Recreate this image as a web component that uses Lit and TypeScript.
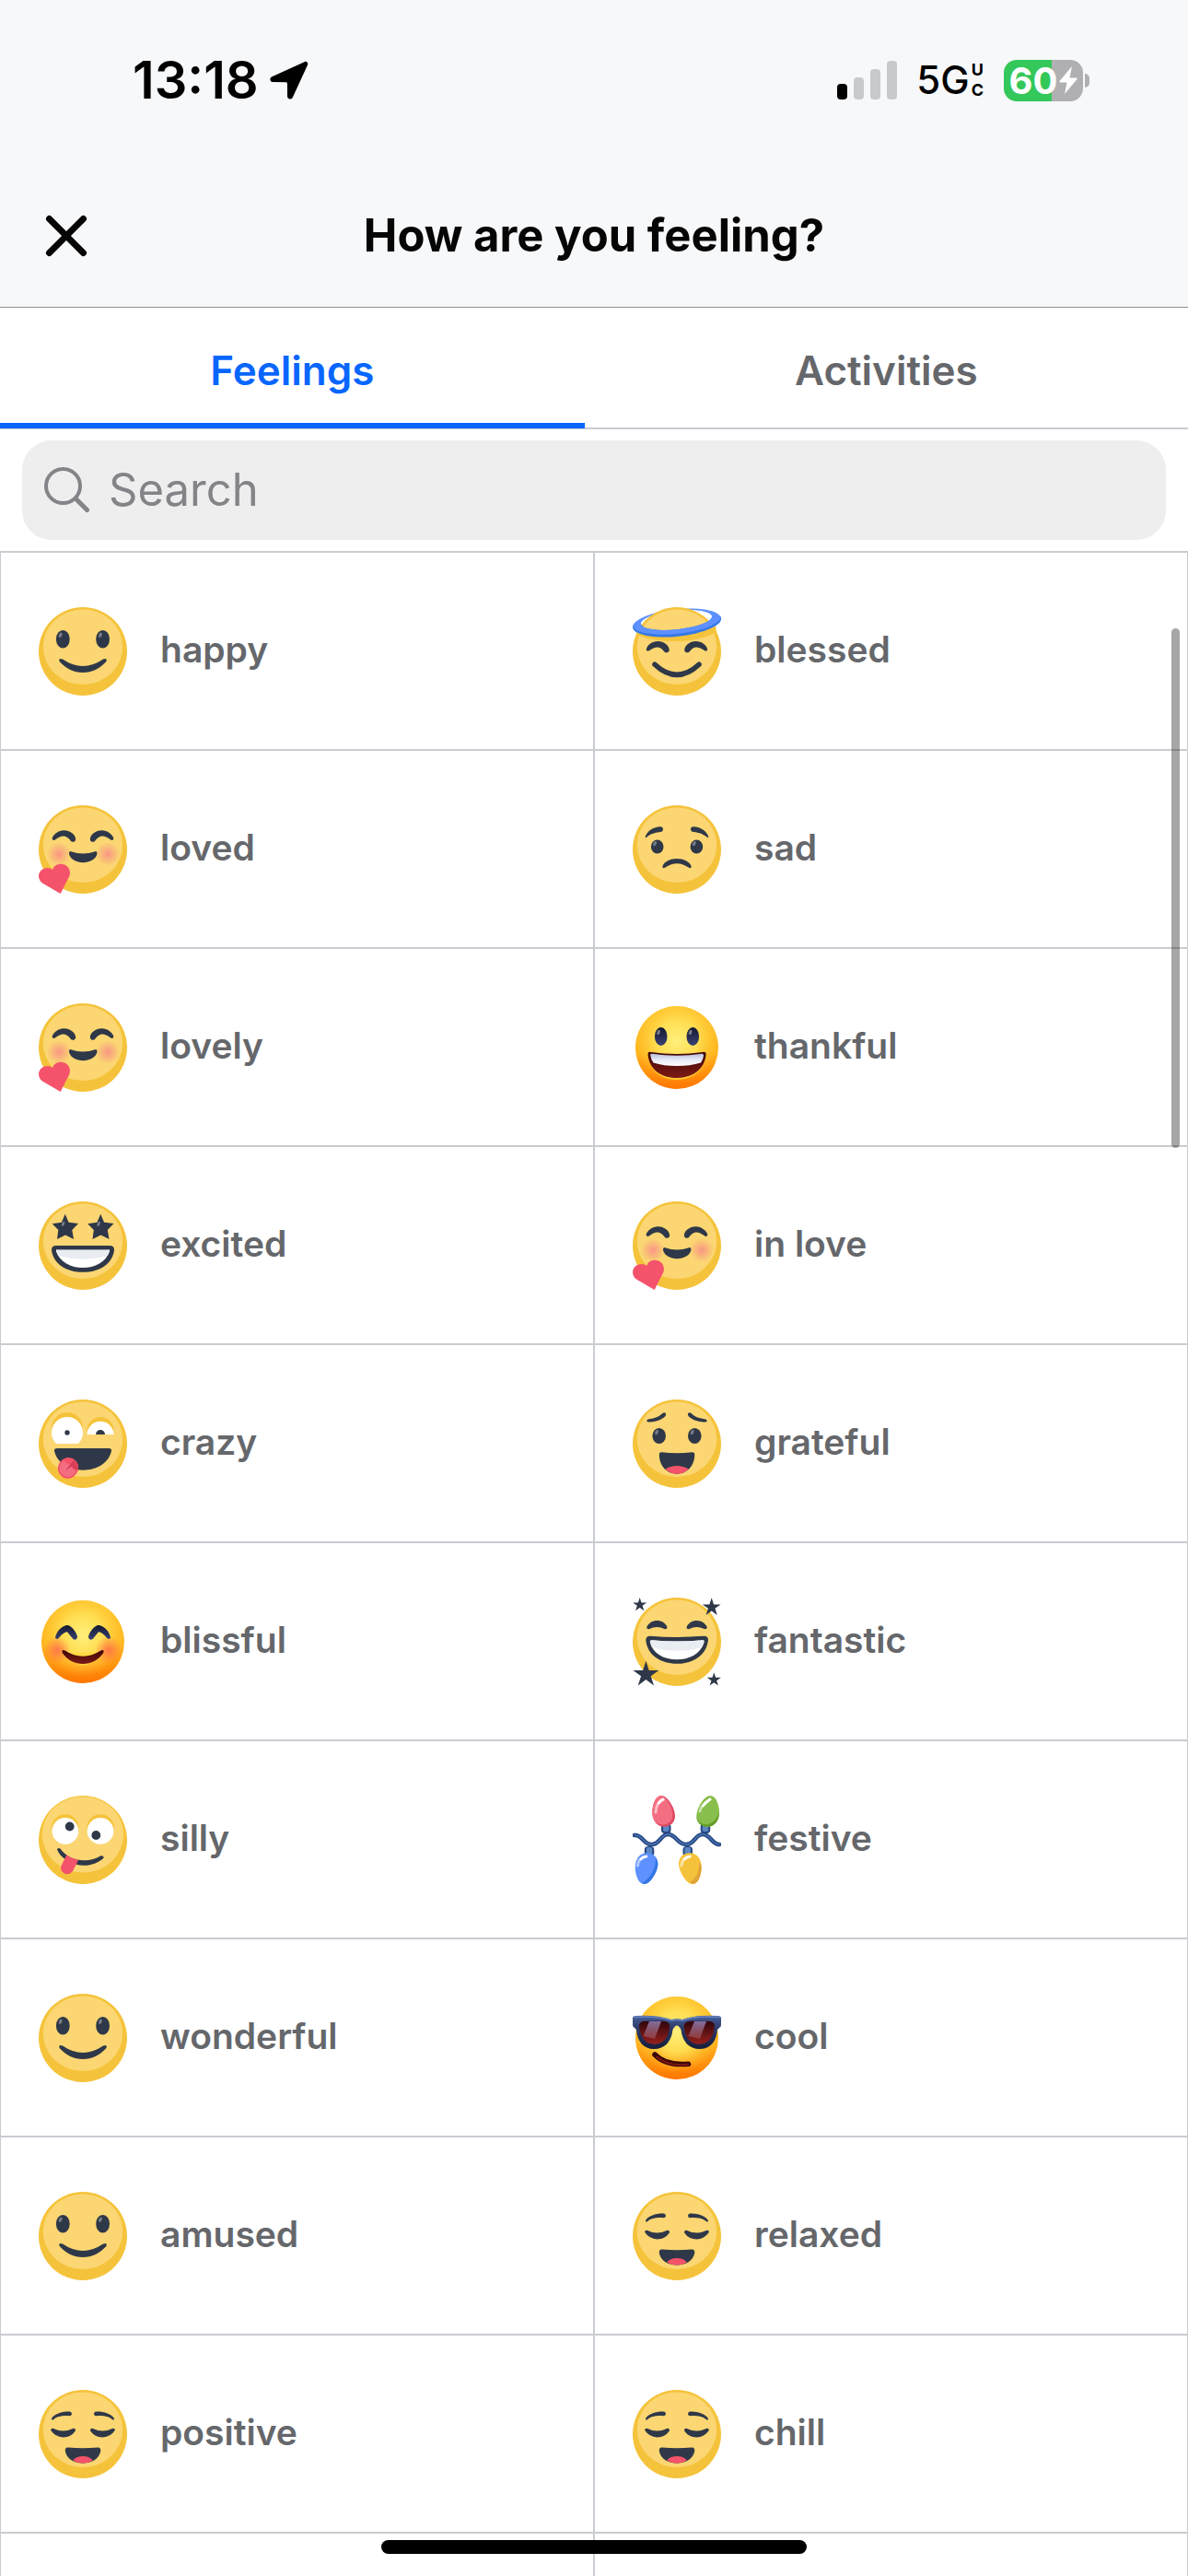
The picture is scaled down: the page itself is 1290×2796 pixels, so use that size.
import { LitElement, html, svg, css, SVGTemplateResult } from "lit";
import { customElement, property, state } from "lit/decorators.js";

const INK = "#2f3848";
const GOLD = "#f5c33b";
const BUTTER = "#fbd672";

/* Mirrors a drawing about the vertical axis of the 96-unit emoji canvas. */
const MIRROR = "translate(96 0) scale(-1 1)";

const base = svg`
  <circle cx="48" cy="48" r="48" fill=${GOLD}></circle>
  <ellipse cx="48" cy="43.2" rx="43.2" ry="40.8" fill=${BUTTER}></ellipse>`;

const glossyBase = svg`
  <circle cx="48" cy="48" r="45" fill="url(#glossy-base)"></circle>
  <circle cx="48" cy="48" r="45" fill="url(#glossy-light)"></circle>`;

const pair = (shape: SVGTemplateResult) => svg`<g>${shape}</g><g transform=${MIRROR}>${shape}</g>`;

const eye = (cx: number, cy: number, rx: number, ry: number, fill = INK) => svg`
  <ellipse cx=${cx} cy=${cy} rx=${rx} ry=${ry} fill=${fill}></ellipse>
  <ellipse cx=${cx - 2.6} cy=${cy - ry / 2.2} rx="1.7" ry="2.8" fill="#767c87"
    transform=${`rotate(24 ${cx - 2.6} ${cy - ry / 2.2})`}></ellipse>`;

const star = (cx: number, cy: number, r: number) => {
  const points = Array.from({ length: 10 }, (_, i) => {
    const radius = i % 2 ? r * 0.38 : r;
    const angle = (Math.PI / 5) * i - Math.PI / 2;
    return `${(cx + radius * Math.cos(angle)).toFixed(2)},${(cy + radius * Math.sin(angle)).toFixed(2)}`;
  }).join(" ");
  return svg`<polygon points=${points} fill=${INK}></polygon>`;
};

const happy = svg`${base}
  ${eye(26.3, 34.7, 7.4, 9.8)}${eye(69.6, 34.7, 7.4, 9.8)}
  <path fill=${INK} d="M26 56.5Q48 71.5 70 56.5Q74.8 54.6 73.4 59C66 67 58 71 48 71S30 67 22.6 59Q21.2 54.6 26 56.5Z"></path>`;

const halo = "M-.3 17a48.3 14.8 0 1 0 96.6 0a48.3 14.8 0 1 0-96.6 0ZM9 14a38.8 10.2 0 1 0 77.6 0a38.8 10.2 0 1 0-77.6 0Z";
const blessed = svg`
  <path d=${halo} fill="#5e91ff" fill-rule="evenodd" transform="rotate(-6 48 17)"></path>
  ${base}
  <path fill=${GOLD} d="M7 26Q46 36 90 20L91 27Q72 37 48 37Q22 37 7 31Z"></path>
  <g clip-path="url(#halo-front)">
    <path d=${halo} fill="#3578e5" fill-rule="evenodd" transform="rotate(-6 48 17)"></path>
    <path d="M-.3 15a48.3 13.8 0 1 0 96.6 0a48.3 13.8 0 1 0-96.6 0ZM9 14a38.8 10.2 0 1 0 77.6 0a38.8 10.2 0 1 0-77.6 0Z"
      fill="#5e91ff" fill-rule="evenodd" transform="rotate(-6 48 17)"></path>
  </g>
  ${pair(svg`<path fill=${INK} d="M14.8 46C15.5 41 21 37 27.5 37C34 37 39.5 41.5 39.8 46.5C39.6 49.6 35.5 50.5 33.6 47.5Q28 40 19 46.5Q15.5 49 14.8 46Z"></path>`)}
  <path d="M24 62.2Q48 84.5 72 62.2" fill="none" stroke=${INK} stroke-width="5.6" stroke-linecap="round"></path>`;

const loved = svg`${base}
  <circle cx="22" cy="53" r="13" fill="url(#blush)"></circle>
  <circle cx="75" cy="53" r="13" fill="url(#blush)"></circle>
  ${pair(svg`<path fill=${INK} d="M14.6 36C16 31.5 21.5 27.3 27.5 27.3C34 27.3 40 31.8 40.2 37C40 40.2 36 41 34.2 38Q28 29.5 18.6 37Q15.2 39.4 14.6 36Z"></path>`)}
  <path fill=${INK} d="M35.2 50.2Q48 54.8 61.2 50.2Q63.7 49.6 63.4 53C62 59 55 62.2 48.2 62.2S34.5 59 33 53Q32.8 49.6 35.2 50.2Z"></path>
  <path fill="#f5536b" d="M23.7 96L4 84.5C-2 80.500-1 71 6 68.700C9.500 67.200 13 68 15.300 70C16 66 20 63.500 25 63.800C32 64.500 35.500 71 33.300 77Z"></path>`;

const sad = svg`${base}
  ${pair(svg`<path fill=${INK} d="M13.7 34C16 27.500 23 23.500 30 23.200C33.800 23.200 33.800 28 31 28.800C25 29.800 19 31 15.500 34.500Q13.800 36 13.700 34Z"></path>`)}
  ${eye(26.7, 45, 6.8, 7.5)}${eye(69.4, 45, 6.8, 7.5)}
  <path fill=${INK} d="M32.4 66.500C34 61 41 58 48 58S62 61 63.700 66.500Q63.700 69 61 67.800C56 64.500 52 63.300 48 63.300S40 64.500 35 67.800Q32.300 69 32.400 66.500Z"></path>`;

const thankful = svg`${glossyBase}
  ${eye(30.7, 36, 6.8, 10, "url(#glossy-eye)")}${eye(65.3, 36, 6.8, 10, "url(#glossy-eye)")}
  <path fill="#ffd83c" opacity=".8" d="M18 58C18 72 30 83 48 83S78 72 78.500 58Z"></path>
  <path fill="url(#glossy-mouth)" d="M16.600 56Q16 52 20 53Q48 57 76 53Q80.200 52 79.600 56C78 71 66 81 48 81S18 71 16.600 56Z"></path>
  <path fill="url(#teeth)" d="M19.200 56.500Q19 54.500 21 54.800Q48 58.600 75 54.800Q77.300 54.500 77 57Q76 62 74 64.500Q62 68 48 68T22.500 64.500Q20 61 19.200 56.500Z"></path>`;

const starEye = svg`
  <path fill=${INK} d="M28.700 13.700L32.600 22.700L43 24L36.300 31L38 41L29 36.400L20 41L21.300 30.900L14.700 24.200L24.900 22.700Z"></path>
  <ellipse cx="26.600" cy="24.400" rx="1.500" ry="2.700" fill="#767c87" transform="rotate(24 26.6 24.4)"></ellipse>`;
const excited = svg`${base}
  ${starEye}<g transform="translate(38.5 0)">${starEye}</g>
  <path fill=${INK} d="M19 48H77Q82.300 48 82 53C80 68 66 76.800 48 76.800S16 68 14 53Q13.700 48 19 48Z"></path>
  <path fill="#fff" d="M20 52.300H76Q77.500 52.300 77 54C73 66 61 72 48 72S23 66 19 54Q18.500 52.300 20 52.300Z"></path>
  <path fill="#e9ecf1" d="M20 52.300H76Q77.500 52.300 77 54L75 58.500Q62 62.600 48 62.600T21 58.500L19 54Q18.500 52.300 20 52.300Z"></path>
  <path fill="#a3a7b0" d="M20 52H76V53H20Z"></path>`;

const crazy = svg`${base}
  <circle cx="31" cy="31" r="17" fill=${GOLD}></circle>
  <circle cx="67" cy="33.500" r="14.500" fill=${GOLD}></circle>
  <path fill=${BUTTER} d="M12 36H49V50H12ZM52 38H83V50H52Z"></path>
  <path fill="#fff" d="M19 48A17 17 0 1 1 43 48Z"></path>
  <circle cx="31" cy="36" r="2.700" fill=${INK}></circle>
  <path fill="#fff" d="M52.500 38A14.500 14.300 0 0 1 81.500 38Z"></path>
  <path fill=${INK} d="M62 38A5 5 0 0 1 72 38Z"></path>
  <path fill=${INK} d="M20 53H76Q79.500 53 79 56C76 69 63 76.700 48 76.700S20 69 17 56Q16.500 53 20 53Z"></path>
  <g transform="rotate(32 32 74.300)">
    <rect x="21.200" y="63" width="21.600" height="22.800" rx="10.600" fill="#f5536b"></rect>
    <path d="M32 63.500Q41.500 63.500 41.800 71Q38 73 34 70.500Z" fill="#d9415a"></path>
    <path d="M23.200 70Q27 72 32 70Q37 73 40.800 72V76Q40 83.800 32 83.800T23.200 76Z" fill="#f46e82"></path>
    <path d="M32.500 64L31 79L34.500 70Z" fill="#d23d55"></path>
  </g>`;

const grateful = svg`${base}
  ${pair(svg`<path fill=${INK} d="M15.200 23.200Q15.500 21.300 18 21.200Q27 20.300 31.500 15.800Q33.500 13.300 35.700 14.800Q37 17.300 34 19.500Q27 24.500 17.500 24.600Q15.300 24.600 15.200 23.200Z"></path>`)}
  ${eye(28.7, 39.5, 7.3, 8.6)}${eye(67.3, 39.5, 7.3, 8.6)}
  <path fill=${INK} d="M28.800 60.500Q28.500 57 31.500 57.200Q48 59.300 64.500 57.200Q67.500 57 67.300 60.500C67 72 59 80.700 48 80.700S29 72 28.800 60.500Z"></path>
  <path fill="#f5536b" d="M35.500 75.500Q41 72 48 72T60.700 75.500Q55 80.800 48 80.800T35.500 75.500Z"></path>`;

const fantastic = svg`${base}
  ${pair(svg`<path fill=${INK} d="M15.200 32.300C17 27.500 22 25 26.500 25S36 27.500 37.500 32.300Q37.300 34.800 34.500 34Q26.500 30.200 18.200 34Q15.400 34.800 15.200 32.300Z"></path>`)}
  <path fill=${INK} d="M19 41.800Q48 44.200 77.500 41.800Q82.500 41.800 81.900 47C80 62 66 71.800 48 71.800S16 62 14.400 47Q14 41.800 19 41.800Z"></path>
  <path fill="#fff" d="M20.500 46.300Q48 48.800 76 46.300Q78 46.300 77.500 48.500C74 61 62 67.300 48 67.300S22 61 18.900 48.500Q18.500 46.300 20.500 46.300Z"></path>
  <path fill="#e9ecf1" d="M20.500 46.300Q48 48.800 76 46.300Q78 46.300 77.500 48.500L75.500 53.500Q63 57.800 48 57.800T20.800 53.500L18.900 48.500Q18.500 46.300 20.500 46.300Z"></path>
  ${star(7.7, 7.9, 7.9)}${star(85.7, 10.6, 10.4)}${star(14.4, 83.5, 14.7)}${star(88.3, 89.2, 7.9)}`;

const blissful = svg`${glossyBase}
  <circle cx="20" cy="57" r="15" fill="url(#hot-blush)"></circle>
  <circle cx="76" cy="57" r="15" fill="url(#hot-blush)"></circle>
  ${pair(svg`<path fill="url(#glossy-eye)" d="M18 43C20 35 27 30 31 30C35 30 41 37 42 42.500C42 46 38.200 46.800 36.500 44L31 37.200C27.500 37.500 24 41 21.800 44Q18.500 46.500 18 43Z"></path>`)}
  <path fill="#ffd83c" opacity=".7" d="M27 60Q48 87 69 60Z"></path>
  <path fill="url(#glossy-mouth)" d="M28.500 57.500Q48 70 67.500 57.500Q71.500 56 70.300 60C65 68 57 72 48 72S31 68 25.700 60Q24.500 56 28.500 57.500Z"></path>`;

const silly = svg`
  <circle cx="48" cy="48" r="48" fill=${GOLD}></circle>
  <ellipse cx="48" cy="42.300" rx="44.200" ry="41.300" fill=${BUTTER}></ellipse>
  <circle cx="28.900" cy="35" r="14.800" fill=${GOLD}></circle>
  <circle cx="67" cy="35" r="14.800" fill=${GOLD}></circle>
  <circle cx="28.900" cy="38.400" r="14.400" fill="#fff"></circle>
  <circle cx="67" cy="38.400" r="14.400" fill="#fff"></circle>
  <circle cx="33.700" cy="33.500" r="4.900" fill=${INK}></circle>
  <circle cx="62.300" cy="43" r="4.900" fill=${INK}></circle>
  <path fill=${INK} d="M19.900 58.500Q20.500 56 23.500 57.500C30 66.500 39 70.300 49.500 70.300C56 70.300 62 68.500 67.500 65.300Q70.700 64.800 70.700 67.500C65 73 57 75.800 49.500 75.800C37 75.800 24 68.500 19.900 58.500Z"></path>
  <path fill="#f5536b" d="M30.300 64.300Q36 68.500 43.300 69.700L37.200 81.500Q33.800 86.500 28.500 84.800Q23 82 24.300 76.500Z"></path>`;

const bulb = "M31 0C24 0 21.300 12 21.300 18C21.300 28 27 33.700 34 33.700C41 33.700 46 29 46 22C46 14 38 0 31 0Z";
const bulbFace = "M31 0C24 0 21.300 12 21.300 18C21.300 26 26 31.500 32.500 31.500C39 31.500 43.300 27 43.300 21C43.300 13 38 3 31 0Z";
const cord = "M2 43C11 42 11 53 20.500 53S30 42 38.500 42S48.500 53 58 53S67.500 42 76 42S86 53 94 53";
const light = (shade: string, face: string) => svg`
  <path d=${bulb} fill=${shade}></path><path d=${bulbFace} fill=${face}></path>`;
const socket = (x: number, y: number) => svg`
  <rect x=${x} y=${y} width="10.500" height="11" rx="4" fill="#27477f"></rect>
  <rect x=${x + 2} y=${y + 1} width="6.500" height="8" rx="2" fill="#5b87c4"></rect>`;
const glint = svg`<path d="M33.500 4Q25.500 7 25 18" fill="none" stroke="#fff" stroke-opacity=".55" stroke-width="3" stroke-linecap="round"></path>
  <path d="M32.500 4.300Q30 5.500 28.500 8" fill="none" stroke="#fff" stroke-width="2.800" stroke-linecap="round"></path>`;
const lowGlint = svg`<path d="M15 66Q6 67 5.500 76" fill="none" stroke="#fff" stroke-opacity=".55" stroke-width="3" stroke-linecap="round"></path>
  <path d="M14.500 66.200Q11 66.500 9 69" fill="none" stroke="#fff" stroke-width="2.800" stroke-linecap="round"></path>`;
const festive = svg`
  ${socket(31, 30)}${socket(73.7, 30)}${socket(12.8, 55)}${socket(54.5, 55)}
  <path d=${cord} fill="none" stroke="#27477f" stroke-width="4.600" stroke-linecap="round"></path>
  <path d=${cord} fill="none" stroke="#4a74b5" stroke-width="1.500" stroke-linecap="round"></path>
  ${light("#e04a63", "#f46e82")}${glint}
  <g transform="translate(115.300 0) scale(-1 1)">
    <path d=${bulb} fill="#88be4b"></path>
    <path d="M21.300 18C21.300 28 27 33.700 34 33.700C41 33.700 46 29 46 22Q45 30.500 35 31.500Q25 30 21.300 18Z" fill="#629b26"></path>
  </g>
  <path d="M84 4Q75 9 73 17" fill="none" stroke="#fff" stroke-opacity=".55" stroke-width="3" stroke-linecap="round"></path>
  <path d="M84 4Q79 7.500 76.500 11" fill="none" stroke="#fff" stroke-width="2.800" stroke-linecap="round"></path>
  <g transform="rotate(180 48 48)">
    <path d=${bulb} fill="#f5c33b"></path>
    <path d="M31 0C24 0 21.300 12 21.300 18Q22 22 23.500 24Q23.500 8 34 2Z" fill="#e3a239"></path>
  </g>
  <g transform="translate(-18.600 96) scale(1 -1)">
    <path d=${bulb} fill="#5e91ff"></path>
    <path d="M31 0C38 0 46 14 46 22Q45.500 26 43.500 28.500Q44 12 29 1Z" fill="#3578e5"></path>
  </g>
  ${lowGlint}<g transform="translate(47.500 0)">${lowGlint}</g>`;

const cool = svg`${glossyBase}
  <path fill="url(#shades)" d="M0 26Q0 24.500 3 24Q26 22.500 42 28Q48 26.500 54 28Q70 22.500 93 24Q96 24.500 96 26V34Q96 36 94 37L92 39C91 52 84 60 73 60C61 60 54 52 52.500 39Q48 30 43.500 39C42 52 35 60 23 60C12 60 5 52 4 39L2 37Q0 36 0 34Z"></path>
  <path d="M1.500 25.500Q26 23.500 42 29Q48 27.500 54 29Q70 23.500 94.500 25.500" fill="none" stroke="#6a86bf" stroke-width="1.400"></path>
  ${pair(svg`<path fill="url(#lens)" d="M7 34Q8 29.700 14 29.700H33Q40.500 30 40.300 36C39 48 33 54.700 23.500 54.700C13 54.700 7.500 46 7 34Z"></path>`)}
  <path fill="url(#glare)" d="M18 30H31L24 49L11.500 46ZM67 30H80L73 49L60.500 46Z"></path>
  <path d="M24 66Q36 78.500 60.500 76.200" fill="none" stroke="#3d0708" stroke-width="5.600" stroke-linecap="round"></path>
  <path d="M26 68.500Q38 79 60 76.800" fill="none" stroke="#7a1a14" stroke-width="2" stroke-linecap="round"></path>`;

const relaxed = svg`${base}
  ${pair(svg`
    <path fill=${INK} d="M14 31C17 26 26 23.300 33.500 23.600C36.800 24.200 36.800 28 33.500 28.300C27 27.600 20 28.800 17 31.500Q14 34 14 31Z"></path>
    <path fill=${INK} d="M13.100 43.800Q13.200 41.300 16.200 42Q26.500 47 37 42Q40.300 41.300 39.900 44.500Q35 51.500 26.500 51.400T13.100 43.800Z"></path>`)}
  <path fill=${INK} d="M28.800 66Q28.500 62.300 32 62.500Q48 64 64 62.500Q67.500 62.300 67.300 66C66 74.500 58 79.500 48 79.500S30 74.500 28.800 66Z"></path>
  <path fill="#f5536b" d="M37.200 76.300Q41 72 48 72T58.800 76.300Q54 79.600 48 79.600T37.200 76.300Z"></path>`;

const sharedDefs = html`
  <svg class="defs" width="0" height="0" aria-hidden="true">
    <defs>
      <linearGradient id="glossy-base" x1="0" y1="0" x2="0" y2="1">
        <stop offset="0" stop-color="#ffc42e"></stop>
        <stop offset=".55" stop-color="#ffb51f"></stop>
        <stop offset="1" stop-color="#ff7600"></stop>
      </linearGradient>
      <radialGradient id="glossy-light" cx=".5" cy=".42" r=".5">
        <stop offset="0" stop-color="#fff07c"></stop>
        <stop offset=".5" stop-color="#ffe45a" stop-opacity=".85"></stop>
        <stop offset="1" stop-color="#ffd23a" stop-opacity="0"></stop>
      </radialGradient>
      <linearGradient id="glossy-eye" x1="0" y1="0" x2="0" y2="1">
        <stop offset="0" stop-color="#14182e"></stop>
        <stop offset="1" stop-color="#3a4274"></stop>
      </linearGradient>
      <linearGradient id="glossy-mouth" x1="0" y1="0" x2="0" y2="1">
        <stop offset="0" stop-color="#3d0708"></stop>
        <stop offset="1" stop-color="#7e1a16"></stop>
      </linearGradient>
      <linearGradient id="teeth" x1="0" y1="0" x2="0" y2="1">
        <stop offset="0" stop-color="#b9bfd8"></stop>
        <stop offset=".5" stop-color="#e8ebf8"></stop>
        <stop offset="1" stop-color="#ffffff"></stop>
      </linearGradient>
      <radialGradient id="blush">
        <stop offset="0" stop-color="#f88f85" stop-opacity=".9"></stop>
        <stop offset="1" stop-color="#f88f85" stop-opacity="0"></stop>
      </radialGradient>
      <radialGradient id="hot-blush">
        <stop offset="0" stop-color="#ff6a4a" stop-opacity=".85"></stop>
        <stop offset="1" stop-color="#ff6a4a" stop-opacity="0"></stop>
      </radialGradient>
      <linearGradient id="shades" x1="0" y1="0" x2="0" y2="1">
        <stop offset="0" stop-color="#47609c"></stop>
        <stop offset=".4" stop-color="#2b3966"></stop>
        <stop offset="1" stop-color="#171e3a"></stop>
      </linearGradient>
      <linearGradient id="lens" x1="0" y1="0" x2="0" y2="1">
        <stop offset="0" stop-color="#2e060c"></stop>
        <stop offset="1" stop-color="#96201c"></stop>
      </linearGradient>
      <linearGradient id="glare" x1="0" y1="0" x2="0" y2="1">
        <stop offset="0" stop-color="#a99be0" stop-opacity=".7"></stop>
        <stop offset="1" stop-color="#c98a94" stop-opacity=".3"></stop>
      </linearGradient>
      <clipPath id="halo-front"><path d="M-2 20L98 10V60H-2Z"></path></clipPath>
    </defs>
  </svg>`;

interface Feeling {
  name: string;
  art: SVGTemplateResult;
}

const FEELINGS: Feeling[] = [
  { name: "happy", art: happy },
  { name: "blessed", art: blessed },
  { name: "loved", art: loved },
  { name: "sad", art: sad },
  { name: "lovely", art: loved },
  { name: "thankful", art: thankful },
  { name: "excited", art: excited },
  { name: "in love", art: loved },
  { name: "crazy", art: crazy },
  { name: "grateful", art: grateful },
  { name: "blissful", art: blissful },
  { name: "fantastic", art: fantastic },
  { name: "silly", art: silly },
  { name: "festive", art: festive },
  { name: "wonderful", art: happy },
  { name: "cool", art: cool },
  { name: "amused", art: happy },
  { name: "relaxed", art: relaxed },
  { name: "positive", art: relaxed },
  { name: "chill", art: relaxed },
];

@customElement("status-bar")
export class StatusBar extends LitElement {
  static styles = css`
    :host {
      display: flex;
      justify-content: space-between;
      align-items: center;
      box-sizing: border-box;
      height: 178px;
      padding: 0 107px 4px 144px;
      color: #000;
    }
    .group {
      display: flex;
      align-items: center;
    }
    .time {
      font-size: 56px;
      font-weight: 600;
      line-height: 64px;
    }
    .location {
      width: 42px;
      height: 42px;
      margin-left: 12px;
    }
    .signal {
      width: 66px;
      height: 42px;
    }
    .network {
      display: flex;
      align-items: center;
      gap: 2px;
      margin: 0 22px 0 20px;
      font-size: 42px;
      font-weight: 500;
      line-height: 48px;
    }
    .network-kind {
      display: grid;
      font-size: 18px;
      font-weight: 700;
      line-height: 22px;
      text-align: center;
    }
    .battery {
      display: flex;
      align-items: center;
      justify-content: center;
      gap: 2px;
      width: 86px;
      height: 45px;
      border-radius: 14px;
      background: linear-gradient(90deg, #34c759 60%, #b0b0b2 60%);
      color: #fff;
      font-size: 40px;
      font-weight: 700;
      line-height: 45px;
    }
    .bolt {
      width: 20px;
      height: 30px;
    }
    .nub {
      width: 5px;
      height: 15px;
      margin-left: 2px;
      border-radius: 0 5px 5px 0;
      background: #b0b0b2;
    }
  `;

  render() {
    return html`
      <div class="group">
        <span class="time">13:18</span>
        <svg class="location" viewBox="0 0 42 42" aria-hidden="true">
          <path d="M37.500 1.200L2.300 17.300C-.8 18.800 0 23 3.500 23.100L17.500 23.300Q18.900 23.300 18.900 24.700L19 38.300C19.100 42 23.400 42.700 24.900 39.500L40.900 4.700C42 2 40 0 37.500 1.200Z"></path>
        </svg>
      </div>
      <div class="group">
        <svg class="signal" viewBox="0 0 66 42" aria-hidden="true">
          <rect x="0" y="25" width="11" height="17" rx="4"></rect>
          <rect x="18" y="18" width="11" height="24" rx="4" fill="#c8c9cb"></rect>
          <rect x="36" y="9" width="11" height="33" rx="4" fill="#c8c9cb"></rect>
          <rect x="54" y="0" width="11" height="42" rx="4" fill="#c8c9cb"></rect>
        </svg>
        <div class="network">
          <span>5G</span>
          <span class="network-kind"><span>U</span><span>C</span></span>
        </div>
        <div class="battery">
          <span>60</span>
          <svg class="bolt" viewBox="0 0 20 30" aria-hidden="true">
            <path fill="#fff" d="M14 0L.5 16Q0 17.500 1.500 17.500H8.500L6 30L19.500 14Q20 12.500 18.500 12.500H11.500Z"></path>
          </svg>
        </div>
        <span class="nub"></span>
      </div>
    `;
  }
}

@customElement("app-root")
export class AppRoot extends LitElement {
  @property() heading = "How are you feeling?";
  @state() private tab = "Feelings";
  @state() private query = "";

  static styles = css`
    :host {
      display: flex;
      flex-direction: column;
      position: relative;
      height: 100vh;
      overflow: hidden;
      background: #fff;
      color: #65676b;
      font-family: Inter, "Liberation Sans", sans-serif;
      --line: #c9ccd1;
    }
    button {
      margin: 0;
      border: 0;
      background: none;
      color: inherit;
      font: inherit;
      cursor: pointer;
    }
    .defs {
      position: absolute;
    }
    .top {
      flex: none;
      border-bottom: 1px solid #8e8f93;
      background: #f7f8fa;
    }
    .nav {
      display: grid;
      grid-template-columns: 144px 1fr 144px;
      align-items: center;
      height: 155px;
    }
    .close {
      display: flex;
      align-items: center;
      height: 100%;
      padding: 0 0 0 49px;
    }
    .close svg {
      width: 46px;
      height: 46px;
    }
    .title {
      margin: 0;
      color: #050505;
      font-size: 49px;
      font-weight: 700;
      line-height: 60px;
      text-align: center;
    }
    .tabs {
      display: flex;
      flex: none;
      height: 130px;
      border-bottom: 2px solid var(--line);
    }
    .tab {
      position: relative;
      flex: 1 1 auto;
      padding: 6px 0 0;
      font-size: 44px;
      font-weight: 600;
      line-height: 56px;
    }
    .tab.selected {
      color: #0866ff;
    }
    .tab.selected::after {
      content: "";
      position: absolute;
      left: 0;
      right: 0;
      bottom: -1px;
      height: 6px;
      background: #0866ff;
    }
    .search {
      flex: none;
      padding: 12px 24px;
      border-bottom: 1px solid var(--line);
    }
    .field {
      display: flex;
      align-items: center;
      gap: 20px;
      height: 108px;
      padding: 0 24px;
      border-radius: 32px;
      background: #eeeeee;
      color: #838388;
    }
    .field svg {
      flex: none;
      width: 50px;
      height: 50px;
    }
    .input {
      flex: 1;
      min-width: 0;
      padding: 0;
      border: 0;
      outline: 0;
      background: none;
      color: #050505;
      font: 400 49px / 60px Inter, "Liberation Sans", sans-serif;
    }
    .input::placeholder {
      color: #838388;
      opacity: 1;
    }
    .list {
      display: grid;
      flex: 1;
      grid-template-columns: 1fr 1fr;
      grid-auto-rows: 215px;
      min-height: 0;
      overflow-y: auto;
      scrollbar-width: none;
    }
    .cell {
      display: flex;
      align-items: center;
      gap: 36px;
      box-sizing: border-box;
      padding: 0 41px;
      border: 1px solid var(--line);
      text-align: left;
    }
    .emoji {
      flex: none;
      width: 96px;
      height: 96px;
    }
    .label {
      padding-bottom: 4px;
      font-size: 39px;
      font-weight: 600;
      line-height: 48px;
    }
    .thumb {
      position: absolute;
      top: 682px;
      right: 9px;
      width: 9px;
      height: 564px;
      border-radius: 5px;
      background: rgba(0, 0, 0, 0.35);
      pointer-events: none;
    }
    .home {
      position: absolute;
      bottom: 24px;
      left: 50%;
      width: 462px;
      height: 15px;
      margin-left: -231px;
      border-radius: 8px;
      background: #000;
      pointer-events: none;
    }
  `;

  private renderTab(name: string) {
    const selected = this.tab === name;
    return html`<button
      class="tab ${selected ? "selected" : ""}"
      role="tab"
      aria-selected=${selected ? "true" : "false"}
      @click=${() => (this.tab = name)}
    >${name}</button>`;
  }

  render() {
    const shown = FEELINGS.filter((f) => f.name.includes(this.query.toLowerCase()));
    return html`
      ${sharedDefs}
      <header class="top">
        <status-bar></status-bar>
        <div class="nav">
          <button class="close" aria-label="Close">
            <svg viewBox="0 0 46 46" fill="none" stroke="#050505" stroke-width="7" stroke-linecap="round" aria-hidden="true">
              <path d="M4.500 4.500L41.500 41.500M41.500 4.500L4.500 41.500"></path>
            </svg>
          </button>
          <h1 class="title">${this.heading}</h1>
        </div>
      </header>
      <div class="tabs" role="tablist">
        ${this.renderTab("Feelings")}${this.renderTab("Activities")}
      </div>
      <div class="search">
        <label class="field">
          <svg viewBox="0 0 50 50" fill="none" stroke="currentColor" stroke-linecap="round" aria-hidden="true">
            <circle cx="20.500" cy="20.500" r="18.500" stroke-width="4"></circle>
            <path d="M34.500 34.500L46.500 46.500" stroke-width="5"></path>
          </svg>
          <input
            class="input"
            type="text"
            placeholder="Search"
            aria-label="Search"
            @input=${(e: Event) => (this.query = (e.target as HTMLInputElement).value)}
          />
        </label>
      </div>
      <main class="list">
        ${shown.map(
          (f) => html`<button class="cell">
            <svg class="emoji" viewBox="0 0 96 96" aria-hidden="true">${f.art}</svg>
            <span class="label">${f.name}</span>
          </button>`
        )}
        <div class="cell"></div>
        <div class="cell"></div>
      </main>
      <div class="thumb"></div>
      <div class="home"></div>
    `;
  }
}
